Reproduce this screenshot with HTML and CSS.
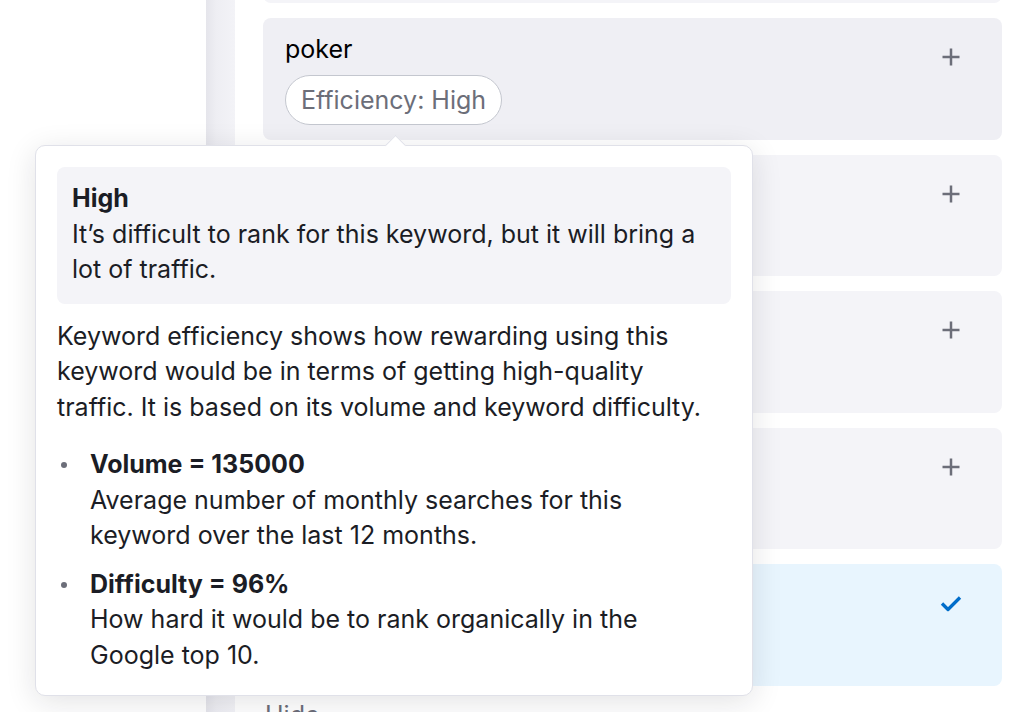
FILE: index.html
```html
<!DOCTYPE html>
<html lang="en">
<head>
    <meta charset="UTF-8">
    <meta name="viewport" content="width=device-width, initial-scale=1.0">
    <title>Keyword Suggestions</title>
    <link rel="stylesheet" href="styles.css">
</head>
<body>
    <div class="layout">
        <aside class="sidebar"></aside>
        <div class="divider"></div>

        <main class="main">
            <ul class="keyword-list">
                <li class="keyword-card">
                    <div class="keyword-body"></div>
                    <span class="card-action"></span>
                </li>
                <li class="keyword-card is-hover">
                    <div class="keyword-body">
                        <div class="keyword-name">poker</div>
                        <span class="efficiency-pill">Efficiency: High</span>
                    </div>
                    <button class="card-action" aria-label="Add keyword">
                        <svg width="18" height="18" viewBox="0 0 18 18"><path d="M9 0.5v17M0.5 9h17" stroke="currentColor" stroke-width="2.5" fill="none"/></svg>
                    </button>
                </li>
                <li class="keyword-card">
                    <div class="keyword-body"></div>
                    <button class="card-action" aria-label="Add keyword">
                        <svg width="18" height="18" viewBox="0 0 18 18"><path d="M9 0.5v17M0.5 9h17" stroke="currentColor" stroke-width="2.5" fill="none"/></svg>
                    </button>
                </li>
                <li class="keyword-card">
                    <div class="keyword-body"></div>
                    <button class="card-action" aria-label="Add keyword">
                        <svg width="18" height="18" viewBox="0 0 18 18"><path d="M9 0.5v17M0.5 9h17" stroke="currentColor" stroke-width="2.5" fill="none"/></svg>
                    </button>
                </li>
                <li class="keyword-card">
                    <div class="keyword-body"></div>
                    <button class="card-action" aria-label="Add keyword">
                        <svg width="18" height="18" viewBox="0 0 18 18"><path d="M9 0.5v17M0.5 9h17" stroke="currentColor" stroke-width="2.5" fill="none"/></svg>
                    </button>
                </li>
                <li class="keyword-card is-selected">
                    <div class="keyword-body"></div>
                    <button class="card-action" aria-label="Keyword added">
                        <svg width="22" height="18" viewBox="0 0 22 18"><path d="M2 9.5l6 6L20 3.5" stroke="currentColor" stroke-width="3.3" fill="none" stroke-linejoin="round"/></svg>
                    </button>
                </li>
            </ul>
            <button class="hide-link">Hide</button>
        </main>
    </div>

    <!-- Efficiency tooltip -->
    <div class="tooltip" role="tooltip">
        <div class="tooltip-level">
            <strong>High</strong>
            <p>It’s difficult to rank for this keyword, but it will bring a lot of traffic.</p>
        </div>
        <p class="tooltip-text">Keyword efficiency shows how rewarding using this keyword would be in terms of getting high-quality traffic. It is based on its volume and keyword difficulty.</p>
        <ul class="tooltip-metrics">
            <li>
                <strong>Volume = 135000</strong>
                <p>Average number of monthly searches for this keyword over the last 12 months.</p>
            </li>
            <li>
                <strong>Difficulty = 96%</strong>
                <p>How hard it would be to rank organically in the Google top 10.</p>
            </li>
        </ul>
    </div>
</body>
</html>
```

FILE: styles.css
```css
:root {
    --text-color: #1b1d25;
    --muted-color: #6c6e79;
    --card-background: #f4f4f8;
    --card-hover: #efeff4;
    --card-selected: #e8f5fe;
    --border-color: #e0e1e9;
    --pill-border: #c4c7cf;
    --accent-color: #006dca;
}

body {
    font-family: 'Inter', 'Noto Sans', sans-serif;
    font-size: 25px;
    line-height: 35.5px;
    color: var(--text-color);
    background-color: #ffffff;
    margin: 0;
    padding: 0;
    overflow: hidden;
}

.layout {
    display: flex;
    min-height: 100vh;
}

.sidebar {
    width: 206px;
    flex-shrink: 0;
    background-color: #ffffff;
}

.divider {
    width: 29px;
    flex-shrink: 0;
    background: linear-gradient(90deg, #e5e5eb 0%, #eeeef3 35%, #f3f3f7 100%);
}

.main {
    flex: 1;
    padding: 0 28px;
}

.keyword-list {
    list-style: none;
    margin: -118.5px 0 0;
    padding: 0;
    display: flex;
    flex-direction: column;
    gap: 15px;
}

.keyword-card {
    display: flex;
    justify-content: space-between;
    align-items: flex-start;
    min-height: 121.5px;
    box-sizing: border-box;
    padding: 16px 22px 14px;
    border-radius: 8px;
    background-color: var(--card-background);
}

.keyword-card.is-hover {
    background-color: var(--card-hover);
}

.keyword-card.is-selected {
    background-color: var(--card-selected);
}

.keyword-name {
    font-size: 25px;
    line-height: 30px;
    color: #000000;
}

.efficiency-pill {
    display: inline-block;
    margin-top: 11px;
    padding: 6px 15px;
    border: 1px solid var(--pill-border);
    border-radius: 25px;
    background-color: #ffffff;
    color: var(--muted-color);
    font-size: 25px;
    line-height: 36px;
}

.card-action {
    display: flex;
    align-items: center;
    justify-content: center;
    width: 40px;
    height: 40px;
    margin: 3px 9px 0 0;
    padding: 0;
    border: none;
    background: transparent;
    color: var(--muted-color);
    cursor: pointer;
}

.is-selected .card-action {
    color: var(--accent-color);
}

.hide-link {
    margin: 12px 0 0 2px;
    padding: 0;
    border: none;
    background: transparent;
    font-family: inherit;
    font-size: 25px;
    line-height: 35.5px;
    color: var(--muted-color);
}

.tooltip {
    position: absolute;
    top: 145px;
    left: 35px;
    width: 718px;
    box-sizing: border-box;
    padding: 21px 21px 22px;
    background-color: #ffffff;
    border: 1px solid var(--border-color);
    border-radius: 10px;
    box-shadow: 0 6px 30px rgba(25, 27, 35, 0.12);
}

.tooltip::before {
    content: '';
    position: absolute;
    top: -8px;
    left: 352px;
    width: 14px;
    height: 14px;
    background-color: #ffffff;
    border-top: 1px solid var(--border-color);
    border-left: 1px solid var(--border-color);
    transform: rotate(45deg);
}

.tooltip p {
    margin: 0;
}

.tooltip-level {
    padding: 14px 15px 16px;
    border-radius: 8px;
    background-color: var(--card-background);
}

.tooltip-level strong,
.tooltip-metrics strong {
    display: block;
    font-weight: 700;
}

.tooltip .tooltip-text {
    margin-top: 15px;
    padding-right: 12px;
}

.tooltip-metrics {
    list-style: none;
    margin: 22px 0 0;
    padding: 0;
}

.tooltip-metrics li {
    position: relative;
    padding: 0 12px 0 33px;
}

.tooltip-metrics li + li {
    margin-top: 13px;
}

.tooltip-metrics li::before {
    content: '';
    position: absolute;
    top: 15px;
    left: 4px;
    width: 6px;
    height: 6px;
    border-radius: 50%;
    background-color: var(--muted-color);
}
```
